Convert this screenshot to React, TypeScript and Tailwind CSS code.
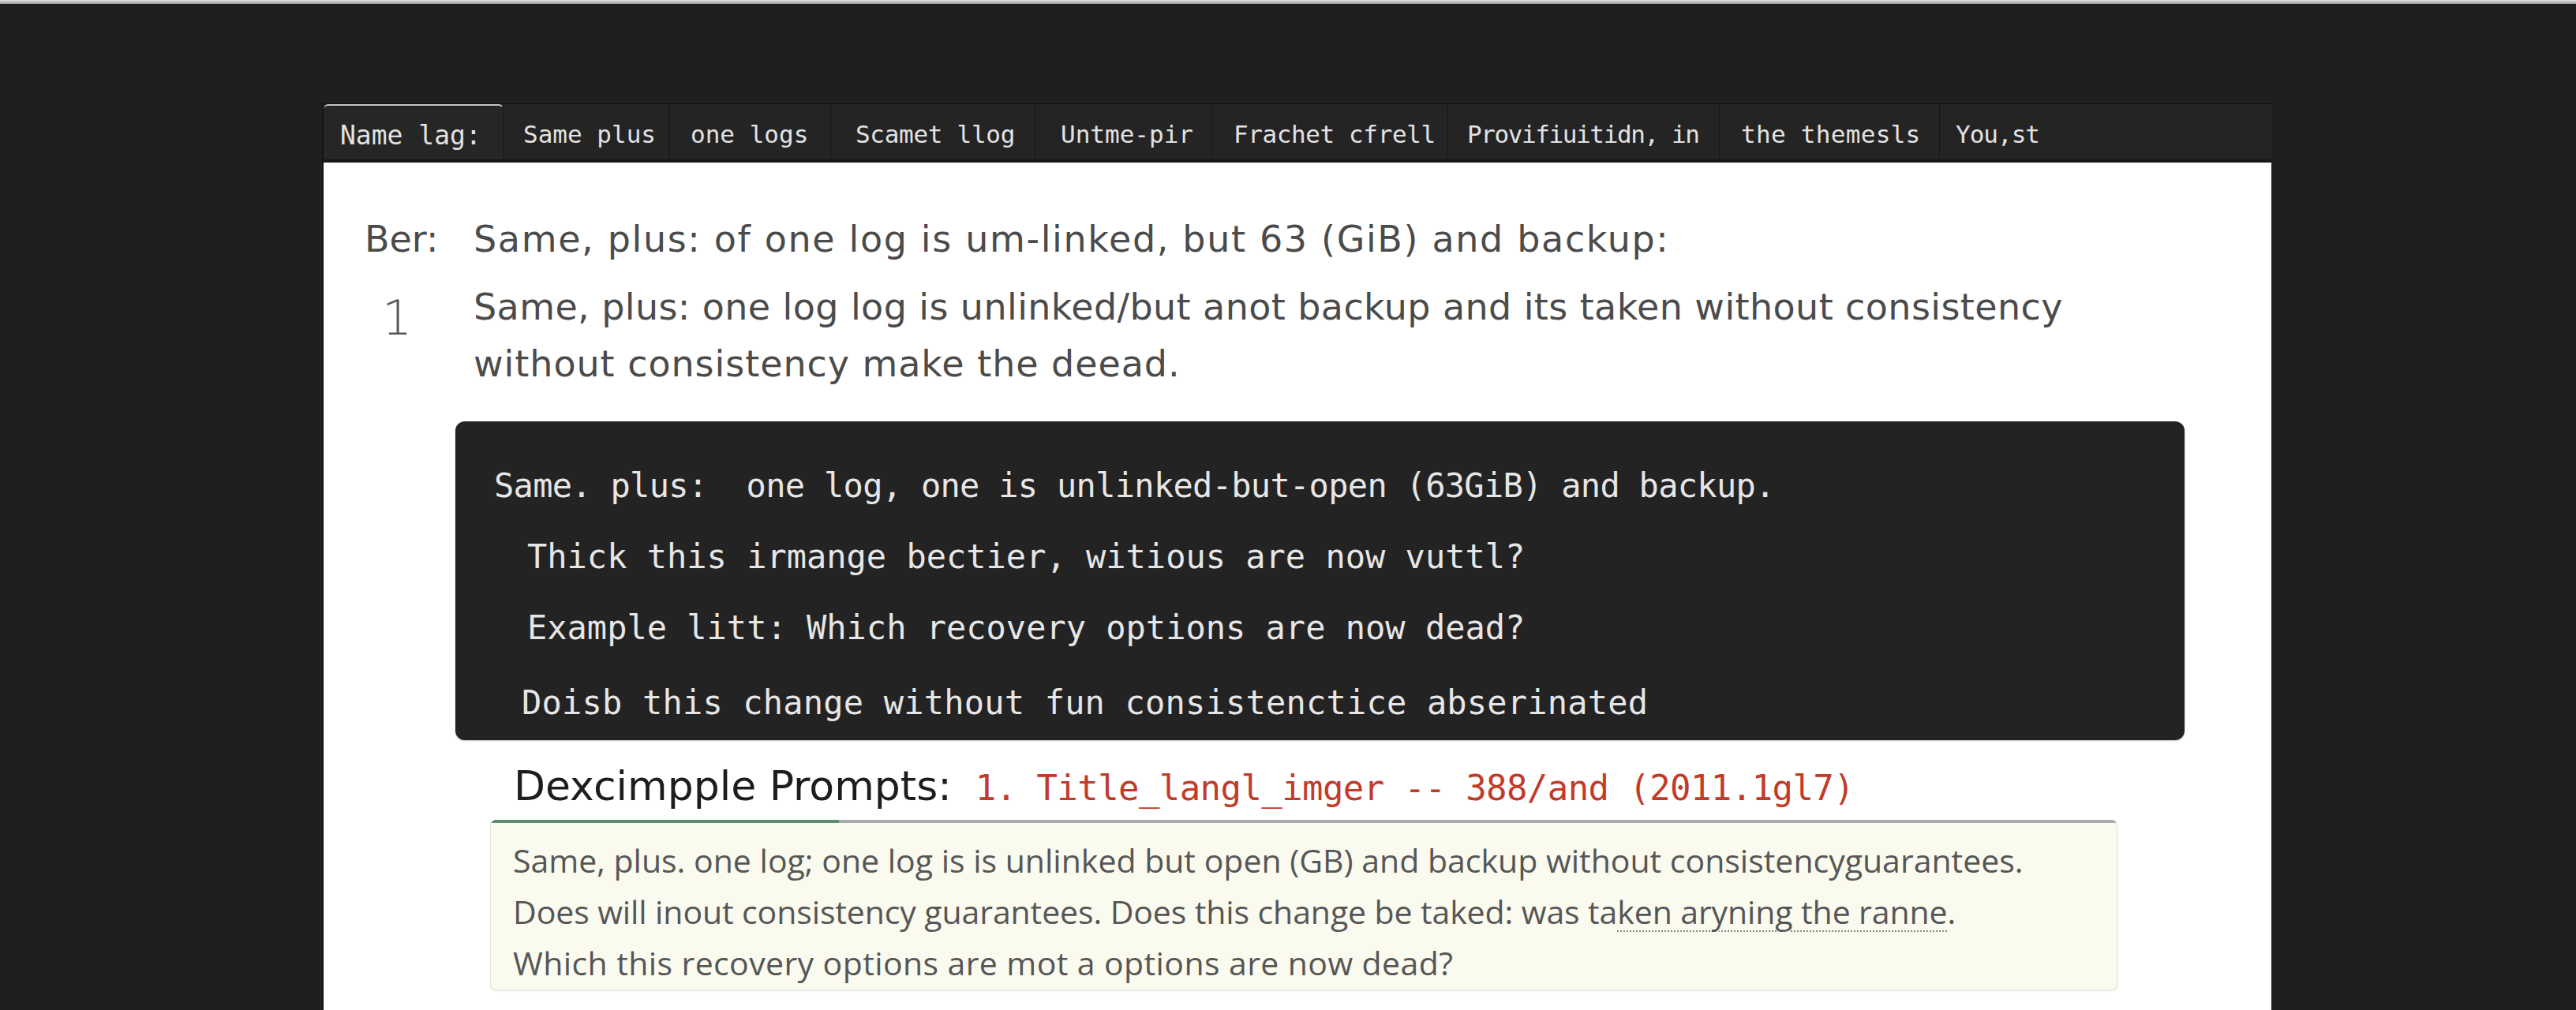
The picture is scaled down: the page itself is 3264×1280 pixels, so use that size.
const tabs = [
  { label: 'Name lag:', cls: 'w-[228px] pl-[21px] text-[33px]', active: true },
  { label: 'Same plus', cls: 'w-[211px] pl-[25px] text-[31px] border-r border-r-[#181818]' },
  { label: 'one logs', cls: 'w-[204px] pl-[26px] text-[31px] border-r border-r-[#181818]' },
  { label: 'Scamet llog', cls: 'w-[259px] pl-[31px] text-[31px] tracking-[-0.3px] border-r border-r-[#181818]' },
  { label: 'Untme-pir', cls: 'w-[225px] pl-[32px] text-[31px] border-r border-r-[#181818]' },
  { label: 'Frachet cfrell', cls: 'w-[298px] pl-[26px] text-[31px] tracking-[-0.4px] border-r border-r-[#181818]' },
  { label: 'Provifiuitidn, in', cls: 'w-[344px] pl-[24px] text-[31px] tracking-[-1.4px] border-r border-r-[#181818]' },
  { label: 'the themesls', cls: 'w-[279px] pl-[27px] text-[31px] tracking-[0.3px] border-r border-r-[#181818]' },
  { label: 'You,st', cls: 'w-[160px] pl-[20px] text-[31px] tracking-[-1px]' },
]

const darkLines = [
  { text: 'Same. plus:  one log, one is unlinked-but-open (63GiB) and backup.', cls: 'pl-[49px] tracking-[-0.7px]' },
  { text: 'Thick this irmange bectier, witious are now vuttl?', cls: 'pl-[91px]' },
  { text: 'Example litt: Which recovery options are now dead?', cls: 'pl-[91px]' },
  { text: 'Doisb this change without fun consistenctice abserinated', cls: 'pl-[84px] mt-[5px] tracking-[0.2px]' },
]

function TabBar() {
  return (
    <div className="flex h-[75px] border-t border-[#0e0e0e] border-b-4 border-b-[#171717] bg-[#242424]">
      {tabs.map((t) => (
        <div
          key={t.label}
          className={
            t.active
              ? `${t.cls} flex h-[70px] items-center pt-[6px] bg-[#262626] border-t-2 border-[#c4c4c4] rounded-t-[6px] border-r border-r-[#161616]`
              : `${t.cls} flex h-[70px] items-center pt-[6px]`
          }
        >
          <span className="whitespace-pre leading-none text-[#e2e2e2] font-['DejaVu_Sans_Mono',monospace]">
            {t.label}
          </span>
        </div>
      ))}
      <div className="flex-1" />
    </div>
  )
}

export default function App() {
  return (
    <div className="h-[1280px] w-[3264px] overflow-hidden bg-[#1f1f1f]">
      <div className="h-[5px] bg-gradient-to-b from-[#e4e4e4] to-[#9a9a9a]" />
      <div className="ml-[408px] mt-[126px] w-[2470px] border-l-2 border-[#141414]">
        <TabBar />

        <div className="h-[1080px] bg-white pl-[52px] pt-[67px] font-['DejaVu_Sans',sans-serif] text-[#4b4b4b]">
          <div className="flex text-[46px] leading-[60px]">
            <span className="w-[138px]">Ber:</span>
            <span className="tracking-[1.65px]">Same, plus: of one log is um-linked, but 63 (GiB) and backup:</span>
          </div>

          <div className="mt-[20px] flex text-[46px] leading-[72px]">
            <span className="w-[138px] pl-[22px] pt-[14px] text-[60px] font-extralight text-[#555]">1</span>
            <div className="flex flex-col">
              <span className="tracking-[0.4px]">Same, plus: one log log is unlinked/but anot backup and its  taken without consistency</span>
              <span className="tracking-[0.95px]">without consistency make the deead.</span>
            </div>
          </div>

          <div className="ml-[115px] mt-[37px] h-[404px] w-[2191px] rounded-[12px] bg-[#232323] pt-[37px] font-['DejaVu_Sans_Mono',monospace] text-[42px] leading-[90px] text-[#e6e6e6] shadow-[0_1px_2px_rgba(0,0,0,0.25)]">
            {darkLines.map((l) => (
              <div key={l.text} className={`${l.cls} whitespace-pre`}>
                {l.text}
              </div>
            ))}
          </div>

          <div className="ml-[189px] mt-[28px] flex h-[62px] items-baseline whitespace-nowrap leading-[60px]">
            <span className="text-[52px] text-[#1d1d1d]">Dexcimpple Prompts:</span>
            <span className="ml-[30px] font-['DejaVu_Sans_Mono',monospace] text-[44px] tracking-[-0.6px] text-[#c23b2a]">
              1. Title_langl_imger -- 388/and (2011.1gl7)
            </span>
          </div>

          <div className="ml-[159px] mt-[11px] w-[2062px] overflow-hidden rounded-[7px] border border-t-0 border-[#e3e3d6] bg-[#fafaee] shadow-[0_1px_2px_rgba(0,0,0,0.08)]">
            <div className="flex h-[4px]">
              <div className="w-[441px] bg-[#5f8c6c]" />
              <div className="flex-1 bg-[#ababab]" />
            </div>
            <div className="h-[211px] pl-[28px] pt-[15px] font-['Open_Sans',sans-serif] text-[41px] leading-[65px] text-[#565656]">
              <div>Same, plus. one log; one log is is unlinked but open (GB) and backup without consistencyguarantees.</div>
              <div className="tracking-[-0.1px]">
                Does will inout consistency guarantees. Does this change be taked: was ta
                <span className="underline decoration-dotted decoration-[#8a8a8a] decoration-2 underline-offset-[8px]">
                  ken aryning the ranne
                </span>
                .
              </div>
              <div className="tracking-[0.4px]">Which this recovery options are mot a options are now dead?</div>
            </div>
          </div>
        </div>
      </div>
    </div>
  )
}
